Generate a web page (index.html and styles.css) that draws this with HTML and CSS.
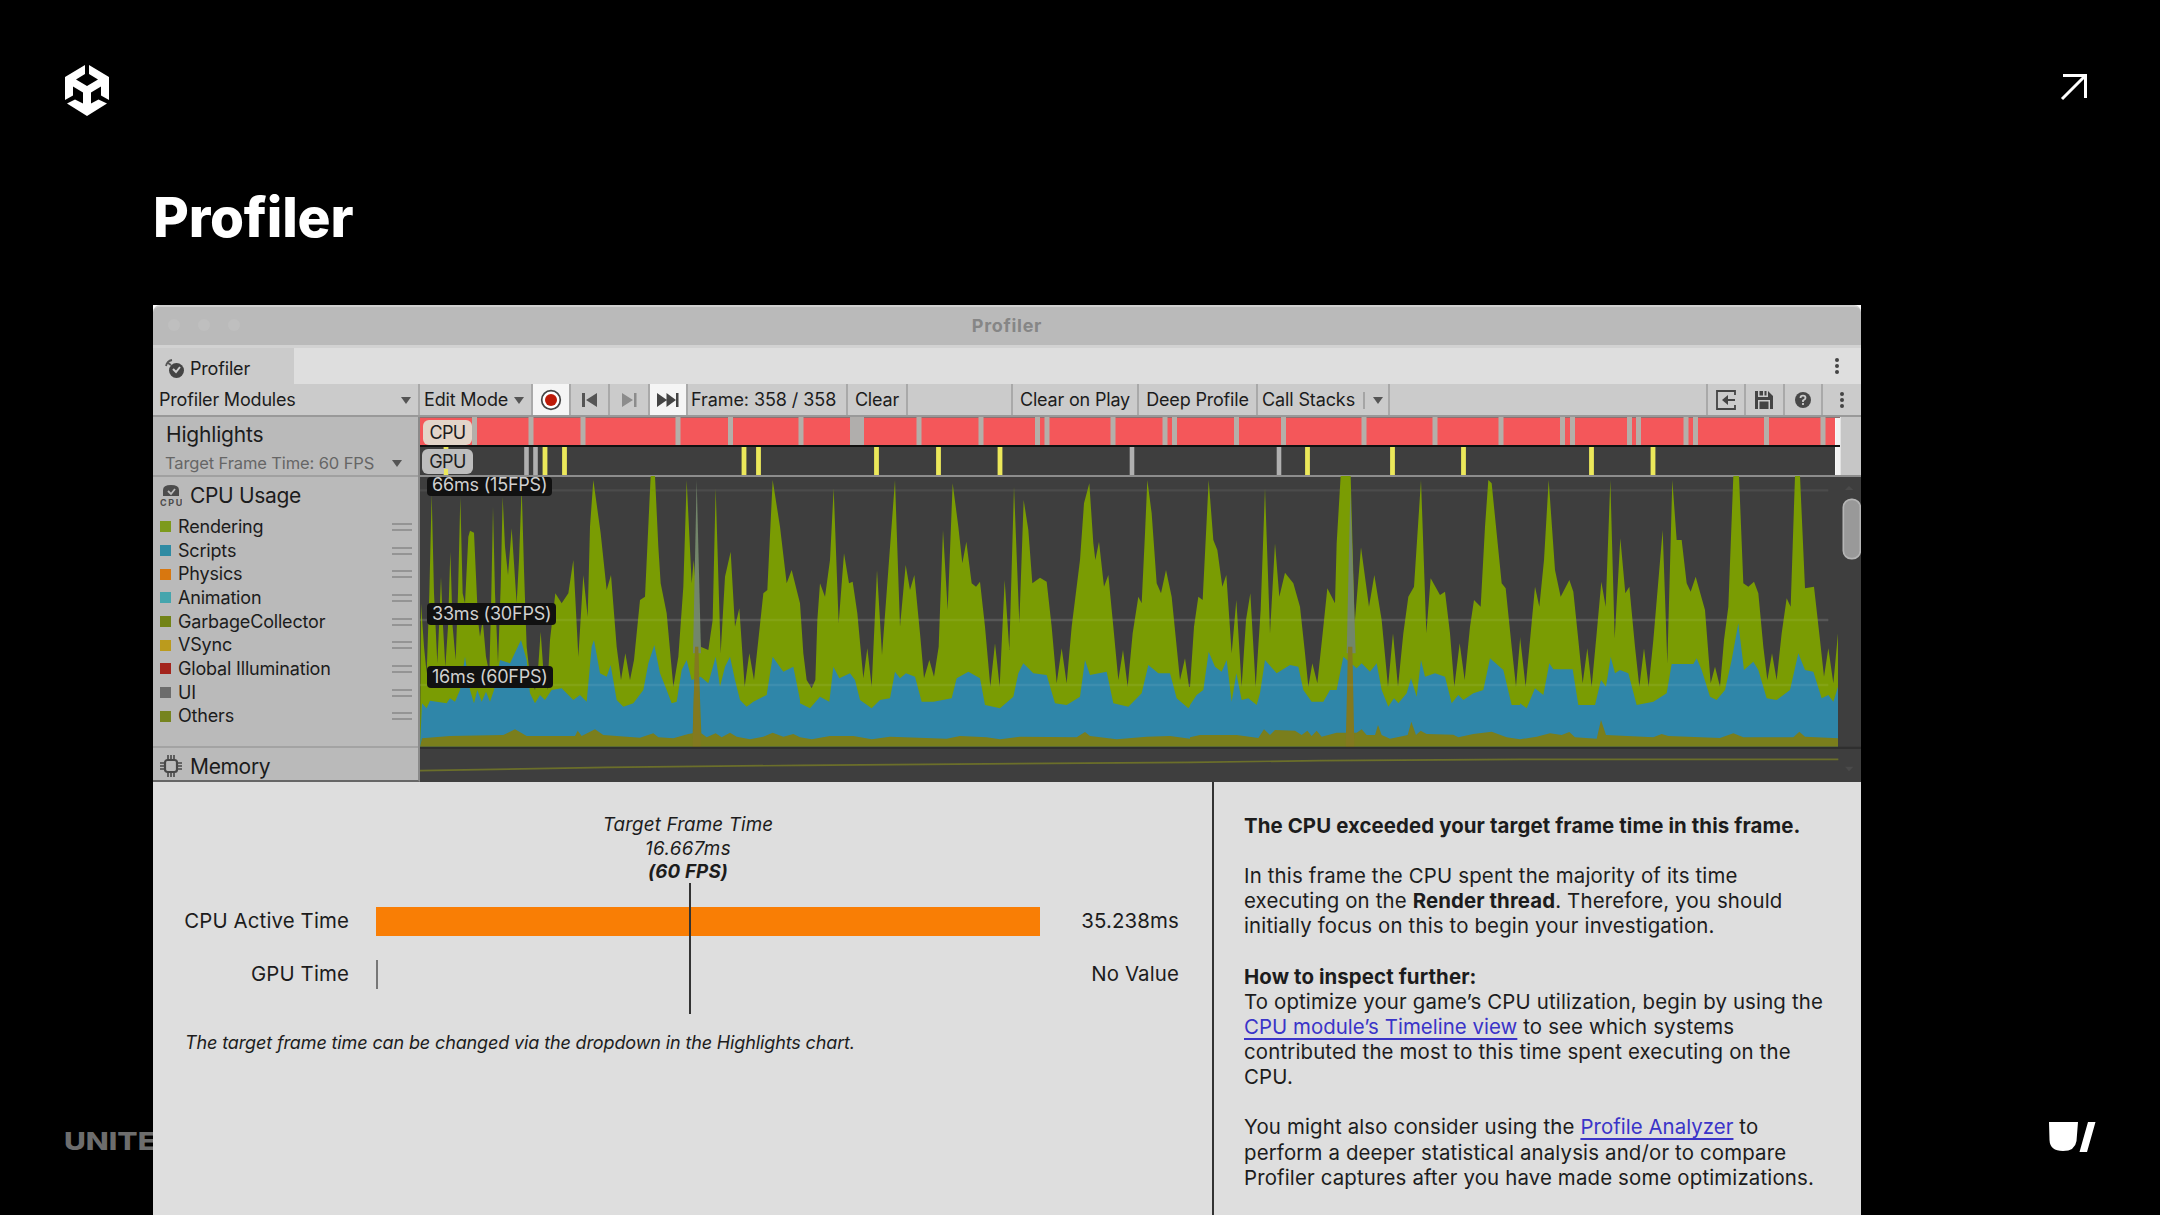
FILE: index.html
```html
<!DOCTYPE html>
<html lang="en">
<head>
<meta charset="utf-8">
<title>Profiler</title>
<link rel="stylesheet" href="styles.css">
</head>
<body>
<header class="top">
  <svg class="logo" width="46" height="52" viewBox="0 0 46 52" fill="#fff">
    <path d="M21 0 L21 9 L12 14.500 L23 21 L34 14.500 L25 9 L25 0 L45 12 L45 35 L37 30.500 L37 21.500 L27 27.500 L27 38.500 L34.500 34.500 L43 38.500 L23 51 L3 38.500 L11 34.500 L19 38.500 L19 27.500 L9 21.500 L9 30.500 L1 35 L1 12 Z"/>
  </svg>
  <svg class="arrow" width="28" height="28" viewBox="0 0 28 28" fill="none" stroke="#fff" stroke-width="3"><path d="M3 2.500H25.500V25M25 3L2 26"/></svg>
</header>
<h1 class="title">Profiler</h1>

<footer class="foot">
  <span class="brand">UNITE</span>
  <svg class="mark" width="47" height="30" viewBox="0 0 47 30" fill="#fff"><path d="M0 0H29L27.500 19Q26 29 14 29Q1 29 .5 18ZM39 0H46.500L38 30H30.500Z"/></svg>
</footer>

<main class="window">
  <div class="titlebar"><span class="dots"><i></i><i></i><i></i></span><b>Profiler</b></div>
  <div class="tabs">
    <div class="tab">
      <svg width="20" height="20" viewBox="0 0 20 20"><circle cx="11.500" cy="11.500" r="7.500" fill="#444"/><path d="M8 10l3 3 4-5" fill="none" stroke="#ccc" stroke-width="2"/><path d="M1 7Q2 2 7 1M3 4L6 6" fill="none" stroke="#555" stroke-width="1.800"/></svg>
      <span>Profiler</span>
    </div>
    <svg class="kebab" width="6" height="18" viewBox="0 0 6 18" fill="#444"><circle cx="3" cy="3" r="2"/><circle cx="3" cy="9" r="2"/><circle cx="3" cy="15" r="2"/></svg>
  </div>
  <div class="toolbar">
    <div class="cell modules"><span>Profiler Modules</span><i class="caret"></i></div>
    <div class="cell mode"><span>Edit Mode</span><i class="caret"></i></div>
    <div class="cell rec on"><svg width="22" height="22" viewBox="0 0 22 22"><circle cx="11" cy="11" r="9.300" fill="#fff" stroke="#444" stroke-width="1.700"/><circle cx="11" cy="11" r="6" fill="#bd1a08"/></svg></div>
    <div class="cell prev"><svg width="18" height="16" viewBox="0 0 18 16" fill="#555"><path d="M1 1h3v14H1zM16 1v14L5 8z"/></svg></div>
    <div class="cell next"><svg width="18" height="16" viewBox="0 0 18 16" fill="#8c8c8c"><path d="M14 1h2.500v14H14zM2 1v14L13 8z"/></svg></div>
    <div class="cell last on"><svg width="22" height="16" viewBox="0 0 22 16" fill="#444"><path d="M19 1h2.500v14H19zM0 1v14L10 8zM9.500 1v14L19 8z"/></svg></div>
    <div class="cell frame"><span>Frame: 358 / 358</span></div>
    <div class="cell clear"><span>Clear</span></div>
    <div class="cell gap"></div>
    <div class="cell cop"><span>Clear on Play</span></div>
    <div class="cell deep"><span>Deep Profile</span></div>
    <div class="cell call"><span>Call Stacks</span><i class="bar"></i><i class="caret"></i></div>
    <div class="cell fill"></div>
    <div class="cell ic"><svg width="20" height="20" viewBox="0 0 20 20" fill="none" stroke="#444" stroke-width="1.800"><path d="M19 5V1H1V19H19V15M19 10H8"/><path d="M12 5L6 10L12 15Z" fill="#444" stroke="none"/></svg></div>
    <div class="cell ic"><svg width="20" height="20" viewBox="0 0 20 20" fill="#444"><path d="M1 1H4V7H14V1L19 6V19H16V10H4V19H1ZM5.500 1H9V5.500H5.500ZM10.500 1H12.500V5.500H10.500ZM5.500 11.500H14.500V19H5.500Z"/></svg></div>
    <div class="cell ic"><svg width="18" height="18" viewBox="0 0 18 18"><circle cx="9" cy="9" r="8" fill="#484848"/><path d="M6.500 7Q6.500 4.700 9 4.700T11.500 7Q11.500 8.200 9 9.500V11M9 12V14" fill="none" stroke="#ccc" stroke-width="1.800"/></svg></div>
    <div class="cell more"><svg width="6" height="18" viewBox="0 0 6 18" fill="#444"><circle cx="3" cy="3" r="2"/><circle cx="3" cy="9" r="2"/><circle cx="3" cy="15" r="2"/></svg></div>
  </div>

  <div class="charts">
    <aside class="side">
      <div class="hl">
        <div class="hl-name">Highlights</div>
        <div class="hl-target"><span>Target Frame Time: 60 FPS</span><i class="caret"></i></div>
      </div>
      <div class="usage">
        <div class="mod">
          <svg width="22" height="22" viewBox="0 0 22 22"><path d="M3 12V6Q3 1 11 1T19 6V12Z" fill="#4c4c4c"/><path d="M8 7l3 3 4-5" fill="none" stroke="#bbb" stroke-width="1.800"/><text x="0" y="21.500" class="mini" textLength="22">CPU</text></svg>
          <span>CPU Usage</span>
        </div>
        <ul class="legend">
          <li><i class="sw c-render"></i><span>Rendering</span><i class="grip"></i></li>
          <li><i class="sw c-script"></i><span>Scripts</span><i class="grip"></i></li>
          <li><i class="sw c-phys"></i><span>Physics</span><i class="grip"></i></li>
          <li><i class="sw c-anim"></i><span>Animation</span><i class="grip"></i></li>
          <li><i class="sw c-gc"></i><span>GarbageCollector</span><i class="grip"></i></li>
          <li><i class="sw c-vsync"></i><span>VSync</span><i class="grip"></i></li>
          <li><i class="sw c-gi"></i><span>Global Illumination</span><i class="grip"></i></li>
          <li><i class="sw c-ui"></i><span>UI</span><i class="grip"></i></li>
          <li><i class="sw c-other"></i><span>Others</span><i class="grip"></i></li>
        </ul>
      </div>
      <div class="mod memory">
        <svg width="22" height="22" viewBox="0 0 22 22" fill="none" stroke="#484848"><rect x="5" y="5" width="12" height="12" rx="2.500" stroke-width="2.200"/><path d="M8 4V0M11 4V0M14 4V0M8 22V18M11 22V18M14 22V18M4 8H0M4 11H0M4 14H0M22 8H18M22 11H18M22 14H18" stroke-width="1.600"/></svg>
        <span>Memory</span>
      </div>
    </aside>

    <section class="plots">
      <div class="strips">
        <svg width="1441" height="60" viewBox="420 417 1441 60">
          <path fill="#8f6f6f" d="M420 416H1840V418H420Z"/>
          <path fill="#f4575a" d="M420 418H1835V445H420Z"/>
          <path fill="#111" d="M420 445H1840V447H420Z"/>
          <path fill="#3e3e3e" d="M420 447H1835V475H420Z"/>
          <path stroke="#b4afa9" stroke-width="5" d="M474.500 417V445M531 417V445M583 417V445M678 417V445M730.500 417V445M801 417V445M919 417V445M981 417V445M1037.500 417V445M1047 417V445M1113 417V445M1165 417V445M1174.500 417V445M1236.500 417V445M1283.500 417V445M1364 417V445M1435 417V445M1501 417V445M1562.500 417V445M1572.500 417V445M1629.500 417V445M1638.500 417V445M1686 417V445M1695.500 417V445M1766.500 417V445M1823 417V445"/>
          <path stroke="#b0aeac" stroke-width="14" d="M857 417V445"/>
          <path stroke="#b0b0b0" stroke-width="4.600" d="M526.500 447V475M535.500 447V475M1132 447V475M1279 447V475"/>
          <path stroke="#ece85a" stroke-width="4.800" d="M446 447V475M545 447V475M564.500 447V475M744 447V475M758.500 447V475M876.500 447V475M938.500 447V475M1000 447V475M1307.500 447V475M1392.500 447V475M1463.500 447V475M1591.500 447V475M1653 447V475"/>
          <path fill="#f2f2f2" d="M1835.500 418H1840V445H1835.500ZM1835.500 447H1840V475H1835.500Z"/>
          <path fill="#c6c6c6" d="M1840.500 416H1861V476H1840.500Z"/>
          <path fill="#8d8d8d" d="M420 475H1861V477H420Z"/>
        </svg>
        <span class="pill cpu"><span>CPU</span></span>
        <span class="pill gpu"><span>GPU</span></span>
      </div>
      <div class="graph">
        <svg width="1441" height="306" viewBox="0 0 4323 918">
          <path fill="#3e3e3e" d="M0 3H4323V918H0Z"/>
          <path stroke="#4b4b4b" stroke-width="7" d="M0 43H4225M0 432H4225M0 627H4225"/>
          <g transform="translate(-30 -48)">
            <path class="g" d="M30 860L33 430 42 560 50 640 58 400 65 100 72 400 82 610 88 480 93 350 98 480 106 620 114 500 121 275 128 500 137 600 144 400 151 110 158 400 165 430 175 230 180 212 192 218 204 480 210 530 218 480 228 590 238 640 244 400 249 140 255 400 264 610 272 380 278 110 285 260 294 345 305 205 320 430 327 300 335 80 342 330 350 560 360 650 375 690 384 630 392 515 400 630 412 690 420 540 436 400 455 430 475 400 490 300 505 590 520 345 533 470 540 200 550 60 572 220 590 390 603 345 620 560 633 660 646 580 660 660 672 600 690 420 705 410 722 48 735 48 745 260 752 370 770 460 790 680 805 590 820 380 830 60 845 370 851 300 872 560 895 570 908 480 917 85 932 580 945 350 962 275 975 500 988 445 1004 680 1018 580 1032 660 1045 540 1060 400 1072 390 1088 60 1110 200 1130 370 1145 330 1170 430 1170 860Z"/>
            <path class="b" d="M30 860L36 730 50 745 60 722 110 730 120 715 135 725 150 690 165 590 180 690 192 730 202 690 215 725 228 695 240 725 252 690 270 600 300 610 333 540 350 600 360 700 375 730 390 705 405 720 425 690 455 685 490 720 510 705 530 725 545 560 552 540 570 640 590 650 602 615 620 720 640 740 670 730 700 690 715 610 733 555 750 640 770 690 785 730 800 725 815 630 830 600 845 660 872 650 895 670 917 590 930 680 945 620 960 590 975 660 990 720 1010 740 1030 725 1070 705 1088 590 1120 635 1150 620 1170 720 1170 860Z"/>
            <path class="o" d="M30 860L36 835 120 828 280 825 315 808 350 828 495 828 503 812 515 828 555 808 580 825 690 833 730 820 745 832 790 835 835 822 848 820 856 560 864 560 874 820 890 832 917 820 935 832 960 818 980 830 1020 838 1060 830 1088 818 1120 830 1150 822 1170 832 1170 860Z"/>
            <path class="s" d="M849 580L860 60 873 580Z"/><path class="p" d="M848 860L855 560H865L872 860Z"/>
          </g>
          <g transform="translate(1140 -48)">
            <path class="g" d="M0 860V430L10 580 20 660 35 685 46 660 52 480 60 370 75 410 90 300 101 85 116 490 132 280 147 370 158 365 172 460 190 655 202 565 215 680 231 330 246 585 262 370 285 60 300 500 317 315 330 390 343 345 360 520 372 655 388 600 402 650 416 560 429 210 443 450 458 70 475 200 487 310 499 245 515 370 528 380 540 365 555 500 571 680 585 550 599 680 614 360 628 570 642 80 658 490 671 120 685 210 697 370 720 353 740 365 755 500 770 670 785 565 800 670 815 500 840 300 852 130 868 70 880 250 886 300 897 245 912 380 925 345 940 500 955 660 969 570 983 680 998 520 1015 410 1025 430 1035 220 1042 60 1055 160 1070 370 1083 400 1098 330 1115 410 1130 560 1140 660 1155 595 1167 680 1170 680V860Z"/>
            <path class="b" d="M0 860V730L30 745 60 710 88 725 100 620 118 655 150 640 165 660 180 720 215 745 240 720 270 715 285 635 300 655 318 640 345 650 365 725 400 725 455 715 470 655 505 635 540 655 555 735 600 745 640 710 655 640 670 610 700 640 740 645 765 730 800 735 840 710 855 600 870 645 920 635 940 730 985 740 1025 700 1045 615 1075 640 1110 640 1130 715 1165 745 1170 738V860Z"/>
            <path class="o" d="M0 860V832L35 838 90 828 160 828 215 838 270 830 440 836 480 828 560 832 600 838 660 830 830 832 855 816 870 828 950 838 1040 830 1110 828 1170 836V860Z"/>
          </g>
          <g transform="translate(2310 -48)">
            <path class="g" d="M0 860V680L12 500 25 410 38 420 56 60 70 240 82 270 97 380 109 345 125 580 139 420 155 680 168 480 181 400 197 680 212 450 225 85 240 520 255 250 268 410 285 338 310 370 330 440 345 580 355 680 367 610 382 670 398 520 412 385 435 430 440 250 452 48 482 48 494 490 513 262 537 440 553 345 575 480 594 680 609 520 624 680 640 520 655 410 672 380 693 60 709 520 722 355 750 405 765 395 780 520 793 680 809 550 824 660 840 500 852 420 872 440 885 200 895 60 905 70 935 370 947 385 965 560 978 680 990 540V860Z"/>
            <path class="b" d="M0 860V735L20 705 40 690 56 575 75 620 95 635 110 600 125 725 139 640 155 720 175 715 200 735 210 700 225 600 260 640 300 615 325 620 340 690 365 725 400 725 420 690 440 690 460 590 500 625 515 610 540 635 560 610 575 690 595 740 612 715 625 730 650 700 663 655 680 710 693 600 705 650 735 640 765 650 785 730 805 705 820 720 850 700 880 690 900 595 940 630 965 735 990 735V860Z"/>
            <path class="o" d="M0 860V832L30 825 140 825 205 834 222 808 240 825 255 810 315 812 335 825 352 812 365 828 380 812 395 830 440 818 465 818 500 818 515 808 530 825 555 825 564 795 575 825 600 836 640 828 653 825 664 785 678 825 692 812 710 822 790 824 805 832 850 822 905 815 950 832 990 838V860Z"/>
            <path class="s" d="M470 580L481 90 497 580Z"/><path class="p" d="M467 860L474 560H487L493 860Z"/>
          </g>
          <g transform="translate(3300 -48)">
            <path class="g" d="M0 860V530L17 680 32 520 45 380 58 440 72 300 86 60 105 330 122 410 148 360 160 395 175 540 188 670 202 565 215 680 230 520 244 365 257 440 271 60 284 535 301 235 316 400 328 380 345 560 358 680 372 565 386 680 400 540 428 210 442 610 457 60 470 240 485 240 500 370 512 395 527 350 555 450 572 670 585 620 600 680 612 540 625 440 640 48 657 48 670 370 685 380 702 365 715 400 730 560 742 660 756 580 770 660 785 520 800 415 812 440 825 48 840 48 855 385 882 380 900 540 912 650 925 565 940 670 954 520V860Z"/>
            <path class="b" d="M0 860V730L20 745 45 685 70 705 88 610 100 628 158 628 175 735 225 735 243 660 258 680 272 590 285 640 300 630 325 640 350 735 400 725 440 700 455 612 520 612 530 595 545 630 570 710 590 720 615 690 635 600 655 490 672 630 700 605 715 630 740 715 770 720 810 690 835 580 855 630 880 635 905 715 925 705 940 725 954 680V860Z"/>
            <path class="o" d="M0 860V838L50 830 90 820 125 825 148 816 165 832 230 836 243 780 258 825 400 832 425 822 445 828 600 834 640 820 670 832 820 832 838 815 855 830 954 835V860Z"/>
          </g>
          <path stroke="#fff" stroke-opacity=".07" stroke-width="7" d="M0 432H4225M0 627H4225"/>
          <path fill="#2f2f2f" d="M0 812H4323V819H0Z"/>
          <path fill="none" stroke="#6b6f2a" stroke-width="5" d="M0 884L560 874 1140 868 2310 859 2700 854 3300 850H4255"/>
          <path fill="#4a4a4a" d="M4275 42L4287 30 4300 42ZM4275 872H4300L4287 886Z"/>
          <rect x="4270" y="70" width="51" height="178" rx="24" fill="#999" stroke="#b5b5b5" stroke-width="5"/>
        </svg>
        <span class="tag t66">66ms (15FPS)</span>
        <span class="tag t33">33ms (30FPS)</span>
        <span class="tag t16">16ms (60FPS)</span>
      </div>
    </section>
  </div>

  <div class="details">
    <section class="times">
      <div class="target"><span>Target Frame Time</span><span class="ms">16.667ms</span><b>(60 FPS)</b></div>
      <div class="rows">
        <div class="row"><span class="name">CPU Active Time</span><div class="track"><i class="orange"></i></div><span class="val">35.238ms</span></div>
        <div class="row"><span class="name">GPU Time</span><div class="track"><i class="tick"></i></div><span class="val">No Value</span></div>
        <i class="limit"></i>
      </div>
      <p class="note">The target frame time can be changed via the dropdown in the Highlights chart.</p>
    </section>
    <section class="advice">
      <p><b>The CPU exceeded your target frame time in this frame.</b></p>
      <p>In this frame the CPU spent the majority of its time<br>executing on the <b>Render thread</b>. Therefore, you should<br>initially focus on this to begin your investigation.</p>
      <p><b>How to inspect further:</b><br>To optimize your game’s CPU utilization, begin by using the<br><a>CPU module’s Timeline view</a> to see which systems<br>contributed the most to this time spent executing on the<br>CPU.</p>
      <p>You might also consider using the <a>Profile Analyzer</a> to<br>perform a deeper statistical analysis and/or to compare<br>Profiler captures after you have made some optimizations.</p>
    </section>
  </div>
</main>
</body>
</html>
```
FILE: styles.css
```css
* { box-sizing: border-box; }
body { margin: 0; width: 2160px; height: 1215px; overflow: hidden; position: relative; background: #000; color: #1c1c1c; font: 18px/1 Inter, "Noto Sans", sans-serif; letter-spacing: -.18px; }
svg { display: block; flex: none; }
i { font-style: normal; flex: none; }
.top { display: flex; justify-content: space-between; align-items: flex-start; height: 184px; padding: 65px 72px 0 64px; }
.arrow { margin-top: 8px; }
.title { margin: 0; height: 121px; padding-left: 153px; color: #fff; font-size: 55px; line-height: 66px; font-weight: 800; letter-spacing: -.2px; }
.foot { position: absolute; left: 64px; right: 64px; top: 1122px; height: 40px; display: flex; justify-content: space-between; align-items: flex-start; }
.brand { color: #6d6d6d; font-size: 25px; line-height: 38px; font-weight: 800; letter-spacing: 0; transform: scaleX(1.2); transform-origin: left; }

.window { position: relative; margin-left: 153px; width: 1708px; height: 910px; background: #fff; overflow: hidden; display: flex; flex-direction: column; }
.titlebar { height: 43px; background: #bababa; border-bottom: 3px solid #d2d2d2; border-top: 2px solid #cfcfcf; border-radius: 7px 7px 0 0; display: flex; align-items: center; justify-content: center; color: #868686; position: relative; letter-spacing: .7px; }
.dots { position: absolute; left: 15px; top: 12px; display: flex; gap: 18px; }
.dots i { width: 12px; height: 12px; border-radius: 6px; background: #bfbfbf; }
.tabs { height: 36px; display: flex; justify-content: space-between; background: #dedede; }
.tab { width: 141px; background: #cbcbcb; display: flex; align-items: center; gap: 5px; padding: 5px 0 0 12px; }
.kebab { margin: 9px 21px 0 0; }
.toolbar { height: 33px; background: #cbcbcb; display: flex; border-bottom: 2px solid #999; }
.cell { display: flex; align-items: center; border-right: 2px solid #a9a9a9; white-space: nowrap; flex: none; padding-top: 1px; }
.caret { width: 0; height: 0; border: 5.5px solid transparent; border-top: 7px solid #555; border-bottom: 0; }
.on { background: #f5f5f5; }
.modules { width: 267px; padding: 1px 7px 0 6px; justify-content: space-between; }
.mode { width: 113px; padding: 1px 7px 0 4px; justify-content: space-between; }
.rec { width: 38px; justify-content: center; }
.prev { width: 39px; justify-content: center; }
.next { width: 40px; justify-content: center; }
.last { width: 38px; justify-content: center; }
.frame { width: 160px; padding-left: 3px; letter-spacing: -.08px; }
.clear { width: 60px; justify-content: center; }
.gap { width: 105px; }
.cop { width: 126px; justify-content: center; }
.deep { width: 119px; justify-content: center; }
.call { width: 132px; padding-left: 4px; gap: 8px; letter-spacing: -.12px; }
.bar { width: 2px; height: 17px; background: #a5a5a5; }
.fill { flex: 1 1 0; }
.ic { width: 38.5px; justify-content: center; }
.more { width: 38px; justify-content: center; border: 0; }

.charts { display: flex; height: 365px; }
.side { width: 267px; background: #bababa; border-right: 2px solid #8a8a8a; border-bottom: 2px solid #666; display: flex; flex-direction: column; }
.hl { height: 60px; border-bottom: 2px solid #a0a0a0; padding: 2px 8px 0 13px; }
.hl-name { font-size: 21px; line-height: 31px; }
.hl-target { display: flex; justify-content: space-between; align-items: center; height: 26px; color: #666; font-size: 16.5px; letter-spacing: -.12px; padding: 0 8px 0 0; margin-left: -1px; }
.usage { height: 271px; border-bottom: 2px solid #a3a3a3; }
.mod { display: flex; align-items: center; gap: 8px; padding-left: 7px; height: 36px; font-size: 21px; letter-spacing: -.33px; }
.mini { font: 700 9px Inter, sans-serif; fill: #4c4c4c; }
.legend { list-style: none; margin: 2px 0 0; padding: 0 6px 0 7px; }
.legend li { display: flex; align-items: center; height: 23.7px; }
.legend span { margin-right: auto; }
.sw { width: 11px; height: 11px; margin-right: 7px; }
.grip { width: 20px; height: 8px; border: solid #949494; border-width: 2px 0; }
.c-render { background: #7d9a1c; }
.c-script { background: #2f8ba3; }
.c-phys { background: #d8770f; }
.c-anim { background: #45a5ad; }
.c-gc { background: #728317; }
.c-vsync { background: #bb9b1d; }
.c-gi { background: #a3241c; }
.c-ui { background: #6c6c6c; }
.c-other { background: #76841f; }
.memory { height: 32px; padding-top: 4px; }
.plots { width: 1441px; position: relative; }
.strips { position: relative; height: 59px; }
.pill { position: absolute; left: 3px; width: 49px; height: 25px; border-radius: 6px; display: flex; align-items: center; justify-content: center; letter-spacing: -.6px; }
.cpu { top: 3px; background: #e3d5c9; }
.gpu { top: 32px; left: 2px; width: 51px; background: linear-gradient(#ece85a, #ece85a) 22px 100% / 4px 5px no-repeat #bdbdbd; }
.graph { position: relative; height: 306px; border-bottom: 2px solid #444; }
.g { fill: #7a9c03; }
.b { fill: #2f86a9; }
.o { fill: #7a7e1c; }
.s { fill: #72866a; }
.p { fill: #83791f; }
.tag { position: absolute; left: 7px; height: 22px; border-radius: 4px; background: #111; color: #d0d0d0; padding: 0 5px; line-height: 22px; white-space: nowrap; letter-spacing: -.2px; }
.t66 { top: 1px; height: 19px; line-height: 15px; }
.t33 { top: 127px; }
.t16 { top: 190px; }

.details { flex: 1; display: flex; background: #dedede; }
.times { width: 1059px; position: relative; padding: 31px 0 0 32px; white-space: nowrap; }
.target { margin-left: 403px; width: 200px; display: flex; flex-direction: column; align-items: center; font-style: italic; font-size: 18.8px; line-height: 23.5px; letter-spacing: .15px; }
.ms { letter-spacing: .4px; }
.rows { position: relative; height: 124px; padding-top: 12px; margin-top: -1px; }
.row { display: flex; align-items: center; height: 53px; font-size: 20.4px; letter-spacing: .14px; }
.name { width: 164px; display: flex; justify-content: flex-end; }
.track { width: 664px; margin-left: 27px; height: 29px; }
.orange { display: block; height: 29px; background: #f97e05; }
.tick { display: block; width: 2px; height: 29px; background: #777; }
.val { width: 139px; display: flex; justify-content: flex-end; }
.limit { position: absolute; left: 504px; top: 0; width: 2px; height: 131px; background: #333; }
.note { margin: 24px 0 0; font-style: italic; line-height: 24px; letter-spacing: -.13px; }
.advice { flex: 1; border-left: 2px solid #333; padding: 31px 0 0 30px; font-size: 20.4px; line-height: 25.12px; white-space: nowrap; letter-spacing: .16px; }
.advice b { letter-spacing: .1px; }
.advice p { margin: 0 0 25.12px; }
a { color: #3a34c8; text-decoration: underline; text-decoration-thickness: 2px; text-underline-offset: 4px; letter-spacing: .05px; }
```
